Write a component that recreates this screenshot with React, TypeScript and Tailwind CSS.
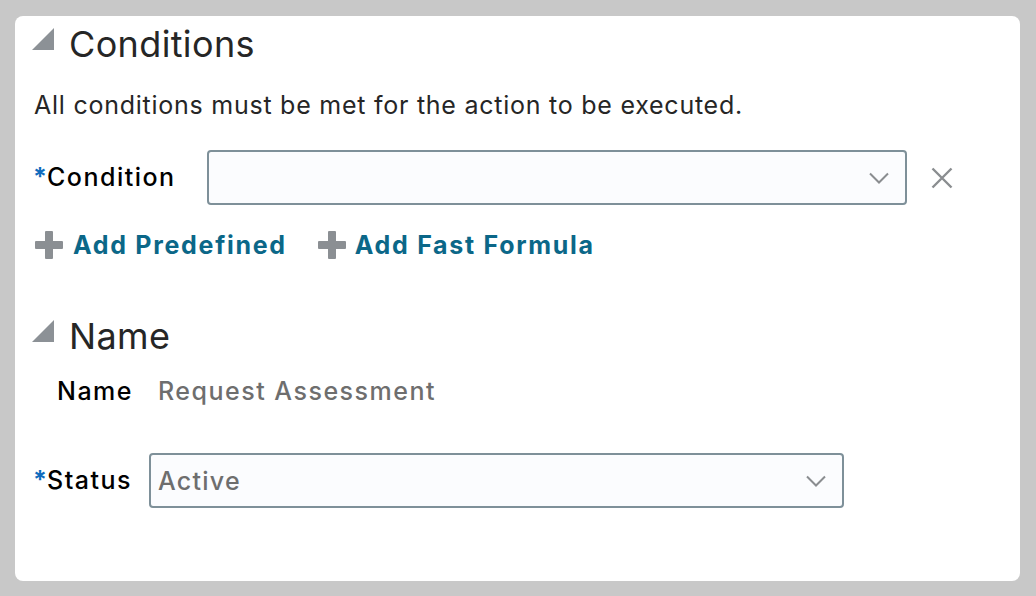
/* ─── bits ─── */
function Disclosure() {
  return (
    <svg width="22" height="22" viewBox="0 0 22 22" className="shrink-0 mt-[2px]">
      <polygon points="0,22 22,22 22,0" fill="#8c9196" />
    </svg>
  )
}

function PlusIcon() {
  return (
    <svg width="28" height="28" viewBox="0 0 28 28" className="shrink-0">
      <rect x="10" y="0" width="8" height="28" rx="1" fill="#8b8f93" />
      <rect x="0" y="10" width="28" height="8" rx="1" fill="#8b8f93" />
    </svg>
  )
}

function Chevron() {
  return (
    <svg width="20" height="12" viewBox="0 0 20 12" className="shrink-0">
      <polyline points="1,1.5 10,10.5 19,1.5" fill="none" stroke="#8a8d90" strokeWidth="2" />
    </svg>
  )
}

function Cross() {
  return (
    <svg width="22" height="22" viewBox="0 0 22 22" className="shrink-0">
      <path d="M1.5 1.5 20.5 20.5 M20.5 1.5 1.5 20.5" stroke="#8a8d90" strokeWidth="2.4" />
    </svg>
  )
}

function SectionHeader({ title }: { title: string }) {
  return (
    <div className="flex items-start">
      <Disclosure />
      <h2 className="ml-[15px] text-[36px] leading-none font-normal text-[#262626] tracking-[0.01em]">
        {title}
      </h2>
    </div>
  )
}

function Required({ label }: { label: string }) {
  return (
    <span className="text-[25px] font-medium text-black tracking-[0.06em]">
      <span className="text-[#0f6cbd] font-bold tracking-normal">*</span>
      {label}
    </span>
  )
}

function SelectBox({ value, width }: { value?: string; width: string }) {
  return (
    <div
      className={`${width} h-[55px] flex items-center justify-between rounded-[4px] border-2 border-[#7e9099] bg-[#fbfcfe] pl-[7px] pr-[16px]`}
    >
      <span className="text-[25px] font-medium text-[#6e6e6e] tracking-[0.05em] mt-[3px]">{value}</span>
      <Chevron />
    </div>
  )
}

/* ─── Page ─── */
export default function App() {
  return (
    <div
      className="w-[1036px] h-[596px] bg-[#c8c8c8] pt-[16px] pl-[15px] pr-[16px] pb-[15px]"
      style={{ fontFamily: 'Inter, "Liberation Sans", sans-serif' }}
    >
      <div className="h-full rounded-lg bg-white pl-[17px] pt-[10px]">
        <SectionHeader title="Conditions" />

        <p className="mt-[31px] ml-[2px] text-[25px] leading-none text-[#262626] tracking-[0.03em]">
          All conditions must be met for the action to be executed.
        </p>

        <div className="mt-[32px] ml-[1px] flex items-center">
          <div className="w-[174px]">
            <Required label="Condition" />
          </div>
          <SelectBox width="w-[700px]" />
          <div className="ml-[24px]">
            <Cross />
          </div>
        </div>

        <div className="mt-[26px] ml-[3px] flex items-center text-[25px] leading-none font-bold text-[#0b6788] tracking-[0.068em]">
          <PlusIcon />
          <span className="ml-[10px]">Add Predefined</span>
          <span className="ml-[31px] flex">
            <PlusIcon />
          </span>
          <span className="ml-[9px]">Add Fast Formula</span>
        </div>

        <div className="mt-[59px]">
          <SectionHeader title="Name" />
        </div>

        <div className="mt-[25px] ml-[25px] flex items-center text-[25px] leading-none font-medium tracking-[0.06em]">
          <span className="text-black">Name</span>
          <span className="ml-[25px] text-[#6e6e6e]">Request Assessment</span>
        </div>

        <div className="mt-[49px] ml-[1px] flex items-center">
          <div className="w-[116px]">
            <Required label="Status" />
          </div>
          <SelectBox value="Active" width="w-[695px]" />
        </div>
      </div>
    </div>
  )
}
